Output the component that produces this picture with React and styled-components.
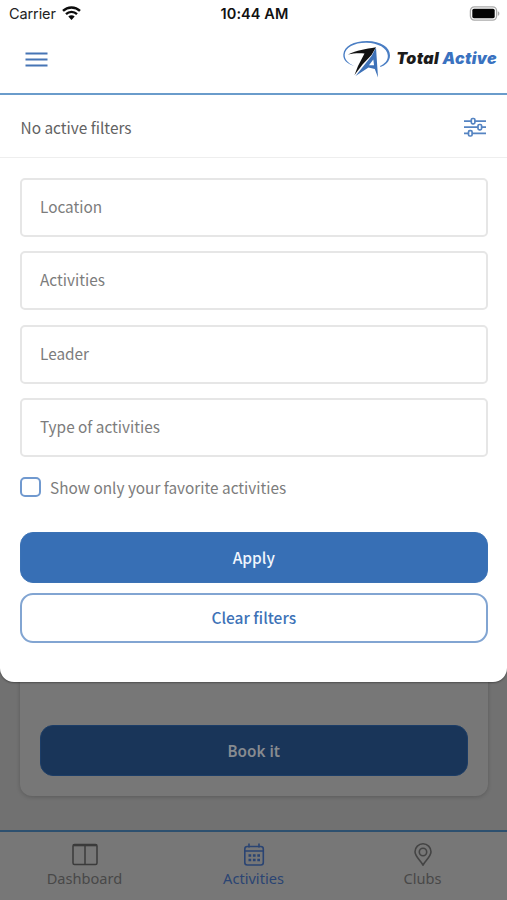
import styled, { createGlobalStyle } from "styled-components";

const GlobalStyle = createGlobalStyle`
  * {
    box-sizing: border-box;
  }

  body {
    margin: 0;
    background: #fff;
    font-family: "Noto Sans CJK SC", "Noto Sans", sans-serif;
  }
`;

const Screen = styled.div`
  position: relative;
  display: flex;
  flex-direction: column;
  height: 900px;
  overflow: hidden;
  background: #717171;
`;

const Sheet = styled.div`
  position: relative;
  z-index: 1;
  height: 682px;
  flex-shrink: 0;
  background: #fff;
  border-radius: 0 0 14px 14px;
  box-shadow: 0 1px 2px rgba(0, 0, 0, 0.35);
`;

const StatusBar = styled.div`
  display: grid;
  grid-template-columns: 1fr auto 1fr;
  align-items: center;
  height: 28px;
  padding: 0 7px 2px 9px;
  font-family: Inter, sans-serif;
  font-size: 14.5px;
  color: #222;

  .carrier {
    display: flex;
    align-items: center;
    gap: 6px;
    letter-spacing: -0.1px;
  }

  .time {
    font-weight: 600;
    letter-spacing: 0.1px;
    color: #111;
  }

  .battery {
    justify-self: end;
  }

  svg {
    display: block;
  }
`;

const Header = styled.header`
  display: flex;
  align-items: center;
  justify-content: space-between;
  height: 67px;
  padding: 0 10px 3px 25px;
  border-bottom: 2px solid #6a9ccb;

  svg {
    display: block;
  }
`;

const Logo = styled.div`
  display: flex;
  align-items: center;
  gap: 5px;

  .name {
    padding-bottom: 2px;
    font-family: Inter, sans-serif;
    font-size: 16px;
    font-style: italic;
    font-weight: 900;
    line-height: 20px;
    letter-spacing: 0.35px;
    white-space: nowrap;
    color: #1b1b1b;
  }

  .name span {
    color: #3a72c0;
  }
`;

const FilterBar = styled.div`
  display: flex;
  align-items: center;
  justify-content: space-between;
  height: 63px;
  padding: 1px 20px 0 20.5px;
  border-bottom: 1px solid #eee;
  font-size: 15.4px;
  color: #626262;
`;

const Form = styled.form`
  display: flex;
  flex-direction: column;
  padding: 20px 19.5px 0 20px;
`;

const Field = styled.div`
  display: flex;
  align-items: center;
  height: 59px;
  margin-bottom: 14.3px;
  padding: 0 18px 3px;
  border: 2px solid #e6e6e6;
  border-radius: 5px;
  font-size: 15.35px;
  color: #7c7c7c;
`;

const CheckRow = styled.label`
  display: flex;
  align-items: center;
  gap: 9px;
  height: 21px;
  margin: 5px 0 34.4px;
  font-size: 15.35px;
  color: #7c7c7c;
`;

const CheckBox = styled.span`
  width: 21px;
  height: 20px;
  border: 2px solid #7099cf;
  border-radius: 5px;
`;

const Button = styled.button`
  display: flex;
  align-items: center;
  justify-content: center;
  width: 100%;
  height: ${({ $outline }) => ($outline ? "50px" : "51px")};
  margin: 0;
  padding: 0 0 1px;
  border: ${({ $outline }) => ($outline ? "2px solid #82a5d2" : "1px solid #3b72b5")};
  border-radius: 13px;
  background: ${({ $outline }) => ($outline ? "#fff" : "#376fb5")};
  color: ${({ $outline }) => ($outline ? "#3d72b7" : "#f1f6fd")};
  font-family: inherit;
  font-size: 15.5px;
  font-weight: 500;

  & + & {
    margin-top: 10px;
  }
`;

const BookButton = styled(Button)`
  background: #193559;
  border-color: #1c3d67;
  color: #878b90;
  padding: 0;
  font-family: "Noto Sans", sans-serif;
  font-size: 15.3px;
  font-weight: 600;
`;

const Card = styled.section`
  height: 126px;
  margin: -12px 19.5px 34px 20px;
  padding: 55px 20px 0;
  border-radius: 12px;
  background: #777;
  box-shadow: 0 1px 4px rgba(0, 0, 0, 0.2);
`;

const TabBar = styled.nav`
  display: grid;
  grid-template-columns: repeat(3, 1fr);
  flex: 1;
  border-top: 2px solid #2d506f;
  background: #777;
`;

const Tab = styled.div`
  display: flex;
  flex-direction: column;
  align-items: center;
  padding-top: 11px;
  font-family: "Noto Sans", sans-serif;
  font-size: 14.6px;
  line-height: 22px;
  color: ${({ $active }) => ($active ? "#2a4473" : "#484848")};

  svg {
    display: block;
    margin-bottom: 1px;
  }
`;

const Wifi = () => (
  <svg width="19" height="14" viewBox="0 0 19 14" fill="none" stroke="#0c0c0c" strokeWidth="2.4">
    <path d="M1 4.9a12.2 12.2 0 0 1 17 0" />
    <path d="M4 8.1a8 8 0 0 1 11 0" />
    <path d="M6.3 10.6a4.6 4.6 0 0 1 6.4 0L9.5 13.9z" fill="#0c0c0c" stroke="none" />
  </svg>
);

const Battery = () => (
  <svg className="battery" width="31" height="15" viewBox="0 0 31 15">
    <rect x="1.4" y="0.9" width="26.2" height="13.2" rx="4" fill="#fff" stroke="#aaa" strokeWidth="1.3" />
    <rect x="3.3" y="2.8" width="22.4" height="9.4" rx="1.6" fill="#050505" />
    <path d="M28.9 5.2c2 .8 2 3.8 0 4.6z" fill="#aaa" />
  </svg>
);

const MenuIcon = () => (
  <svg width="23" height="17" viewBox="0 0 23 17" stroke="#4675b5" strokeWidth="2.2">
    <path d="M0.5 2.5h22M0.5 8.5h22M0.5 14.5h22" />
  </svg>
);

const LogoMark = () => (
  <svg width="48" height="38" viewBox="0 0 48 38">
    <path
      d="M11 26C4 23.500 0 20 .3 14.500C1 6 11 1 24 1C38 1.200 47 7 47 15.500C47 21.500 42 25.500 37.500 27L37 26C41.500 24 45.200 20.500 44.800 15.500C44.300 8 35 3 23.500 2.800C11.500 2.600 2.200 7.500 1.700 14.500C1.400 19.500 5 23 11 26Z"
      fill="#4a7ec4"
    />
    <path d="M5 14.500C14 10 22 9 33 7.200L28.500 15L19.500 24.500L11.500 35L15 26L21.500 13.500C15 13 10 13.500 5 14.500Z" fill="#111" />
    <path d="M33 7.500L35 37.500L31.800 29L25.500 27.500L12.500 36L20.500 26L28.500 16Z" fill="#3e72b8" />
    <path d="M30.300 19.500L26 25.300L31 25.300Z" fill="#fff" />
  </svg>
);

const SlidersIcon = () => (
  <svg width="24" height="20" viewBox="0 0 24 20" fill="#fff" stroke="#5584c2" strokeWidth="1.7">
    <path d="M1 4.200h22M1 10.200h22M1 16.300h22" />
    <rect x="8.300" y="1.500" width="3.600" height="5.400" rx="1.300" />
    <rect x="15" y="7.500" width="3.600" height="5.400" rx="1.300" />
    <rect x="5.500" y="13.600" width="3.600" height="5.400" rx="1.300" />
  </svg>
);

const DashboardIcon = () => (
  <svg width="26" height="23" viewBox="0 0 26 23" fill="none" stroke="#3b3b3b" strokeWidth="1.5">
    <rect x="1" y="1.500" width="24" height="20" rx="1.500" />
    <path d="M1 2.300h24" strokeWidth="2" />
    <path d="M13 2v19.500" />
  </svg>
);

const CalendarIcon = () => (
  <svg width="22" height="23" viewBox="0 0 22 23" fill="none" stroke="#2a4473" strokeWidth="1.6">
    <rect x="1.800" y="3.500" width="18.500" height="18.500" rx="2.500" />
    <path d="M1.800 8h18.500M6 0.500v4M16 0.500v4" />
    <path d="M5.500 12.500h11.500M5.500 17h11.500" strokeWidth="2.600" strokeDasharray="2.700 1.700" />
  </svg>
);

const PinIcon = () => (
  <svg width="20" height="23" viewBox="0 0 20 23" fill="none" stroke="#444" strokeWidth="1.600">
    <path d="M10 22C7.500 17.500 2 13.500 2 8.800a8 8 0 0 1 16 0C18 13.500 12.500 17.500 10 22Z" />
    <circle cx="10" cy="9" r="3.700" />
  </svg>
);

const fields = ["Location", "Activities", "Leader", "Type of activities"];

const App = () => {
  return (
    <>
      <GlobalStyle />
      <Screen>
        <Sheet>
          <StatusBar>
            <div className="carrier">
              Carrier <Wifi />
            </div>
            <div className="time">10:44 AM</div>
            <Battery />
          </StatusBar>
          <Header>
            <MenuIcon />
            <Logo>
              <LogoMark />
              <div className="name">
                Total <span>Active</span>
              </div>
            </Logo>
          </Header>
          <FilterBar>
            No active filters
            <SlidersIcon />
          </FilterBar>
          <Form>
            {fields.map((field) => (
              <Field key={field}>{field}</Field>
            ))}
            <CheckRow>
              <CheckBox />
              Show only your favorite activities
            </CheckRow>
            <Button type="button">Apply</Button>
            <Button type="button" $outline>
              Clear filters
            </Button>
          </Form>
        </Sheet>

        <Card>
          <BookButton type="button">Book it</BookButton>
        </Card>

        <TabBar>
          <Tab>
            <DashboardIcon />
            Dashboard
          </Tab>
          <Tab $active>
            <CalendarIcon />
            Activities
          </Tab>
          <Tab>
            <PinIcon />
            Clubs
          </Tab>
        </TabBar>
      </Screen>
    </>
  );
};

export default App;
